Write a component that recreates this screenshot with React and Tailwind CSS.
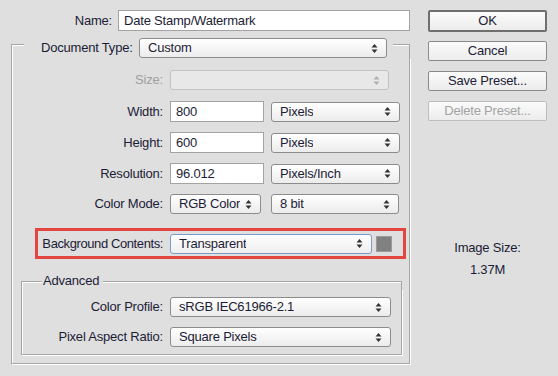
import React from "react";

const font = { fontFamily: '"Liberation Sans", Arial, sans-serif' };

function Arrows({ disabled }) {
  return (
    <svg width="7" height="11" viewBox="0 0 7 11" className="shrink-0">
      <polygon points="0.5,4.5 3.5,1 6.5,4.5" fill={disabled ? "#b0b0b0" : "#333"} />
      <polygon points="0.5,6.5 3.5,10 6.5,6.5" fill={disabled ? "#b0b0b0" : "#333"} />
    </svg>
  );
}

function Select({ value, width, disabled, focus }) {
  return (
    <div
      className={`h-[20px] flex items-center justify-between pl-[8px] pr-[8px] rounded-[3px] border shrink-0 ${
        disabled
          ? "border-[#c2c2c2] bg-[#e8e8e8]"
          : focus
          ? "border-[#7a9cc8] bg-gradient-to-b from-white to-[#eeeeee]"
          : "border-[#8c8c8c] bg-gradient-to-b from-white to-[#ececec]"
      }`}
      style={{ width }}
    >
      <span className="whitespace-nowrap overflow-hidden">{value}</span>
      <Arrows disabled={disabled} />
    </div>
  );
}

function Field({ value, width }) {
  return (
    <div
      className="h-[21px] flex items-center pl-[5px] bg-white border border-[#a3a3a3] shrink-0"
      style={{ width }}
    >
      {value}
    </div>
  );
}

function Row({ label, labelW, children, className = "", muted }) {
  return (
    <div className={`flex items-center ${className}`}>
      <div
        className={`text-right shrink-0 whitespace-nowrap ${muted ? "text-[#a0a0a0]" : ""}`}
        style={{ width: labelW }}
      >
        {label}
      </div>
      <div className="ml-[7px] flex items-center gap-[7px]">{children}</div>
    </div>
  );
}

function Button({ children, primary, disabled }) {
  return (
    <div
      className={`w-[119px] flex items-center justify-center rounded-[2px] bg-gradient-to-b from-[#fbfbfb] to-[#ececec] ${
        primary
          ? "h-[22px] border-2 border-[#6f6f6f]"
          : disabled
          ? "h-[20px] border border-[#bdbdbd] text-[#a3a3a3]"
          : "h-[20px] border border-[#8a8a8a]"
      }`}
    >
      {children}
    </div>
  );
}

export default function App() {
  return (
    <div
      className="w-[558px] h-[376px] bg-[#dfdfdf] text-[13px] tracking-[-0.2px] text-[#1c1c36] flex overflow-hidden"
      style={font}
    >
      {/* left column */}
      <div className="w-[428px] shrink-0 pt-[10px]">
        <div className="flex items-center">
          <div className="w-[112px] text-right">Name:</div>
          <div className="ml-[6px]">
            <Field value="Date Stamp/Watermark" width="292px" />
          </div>
        </div>

        {/* document group */}
        <div className="ml-[11px] w-[399px] mt-[7px]">
          <div className="flex h-[20px]">
            <div className="w-[13px] mt-[6px] border-l border-t border-[#a6a6a6] shadow-[inset_1px_1px_0_#fff]" />
            <div className="w-[17px]" />
            <div className="w-[91px] leading-[20px] whitespace-nowrap">Document Type:</div>
            <div className="ml-[7px]">
              <Select value="Custom" width="248px" />
            </div>
            <div className="flex-1 ml-[6px] mt-[6px] border-t border-r border-[#a6a6a6] shadow-[inset_0_1px_0_#fff]" />
          </div>
          <div className="border-l border-r border-b border-[#a6a6a6] shadow-[inset_1px_0_0_#fff,1px_1px_0_#fff] pt-[12px] pb-[8px]">
            <Row label="Size:" labelW="151px" muted>
              <Select value="" width="219px" disabled />
            </Row>
            <Row label="Width:" labelW="151px" className="mt-[11px]">
              <Field value="800" width="94px" />
              <Select value="Pixels" width="129px" />
            </Row>
            <Row label="Height:" labelW="151px" className="mt-[10px]">
              <Field value="600" width="94px" />
              <Select value="Pixels" width="129px" />
            </Row>
            <Row label="Resolution:" labelW="151px" className="mt-[10px]">
              <Field value="96.012" width="94px" />
              <Select value="Pixels/Inch" width="129px" />
            </Row>
            <Row label="Color Mode:" labelW="151px" className="mt-[10px]">
              <Select value="RGB Color" width="91px" />
              <div className="ml-[3px]">
                <Select value="8 bit" width="128px" />
              </div>
            </Row>

            {/* highlighted row */}
            <div className="ml-[23px] mt-[14px] w-[371px] h-[31px] border-[3px] border-[#e2463f] flex items-center">
              <div className="w-[125px] text-right shrink-0 whitespace-nowrap tracking-[-0.4px]">
                Background Contents:
              </div>
              <div className="ml-[7px]">
                <Select value="Transparent" width="202px" focus />
              </div>
              <div className="ml-[4px] w-[16px] h-[16px] bg-[#808080] border border-[#9a9a9a]" />
            </div>

            {/* advanced group */}
            <div className="ml-[9px] w-[381px] mt-[14px]">
              <div className="flex h-[16px]">
                <div className="w-[21px] mt-[8px] border-l border-t border-[#a6a6a6] shadow-[inset_1px_1px_0_#fff]" />
                <div className="leading-[16px] px-[1px]">Advanced</div>
                <div className="flex-1 ml-[3px] mt-[8px] border-t border-r border-[#a6a6a6] shadow-[inset_0_1px_0_#fff]" />
              </div>
              <div className="border-l border-r border-b border-[#a6a6a6] shadow-[inset_1px_0_0_#fff,1px_1px_0_#fff] pt-[8px] pb-[7px]">
                <Row label="Color Profile:" labelW="141px">
                  <Select value="sRGB IEC61966-2.1" width="221px" />
                </Row>
                <Row label="Pixel Aspect Ratio:" labelW="141px" className="mt-[10px]">
                  <Select value="Square Pixels" width="221px" />
                </Row>
              </div>
            </div>
          </div>
        </div>
      </div>

      {/* right column */}
      <div className="pt-[10px] flex flex-col">
        <Button primary>OK</Button>
        <div className="mt-[9px] flex flex-col gap-[10px]">
          <Button>Cancel</Button>
          <Button>Save Preset...</Button>
          <Button disabled>Delete Preset...</Button>
        </div>
        <div className="mt-[119px] text-center leading-[16px]">Image Size:</div>
        <div className="mt-[6px] text-center leading-[16px]">1.37M</div>
      </div>
    </div>
  );
}
